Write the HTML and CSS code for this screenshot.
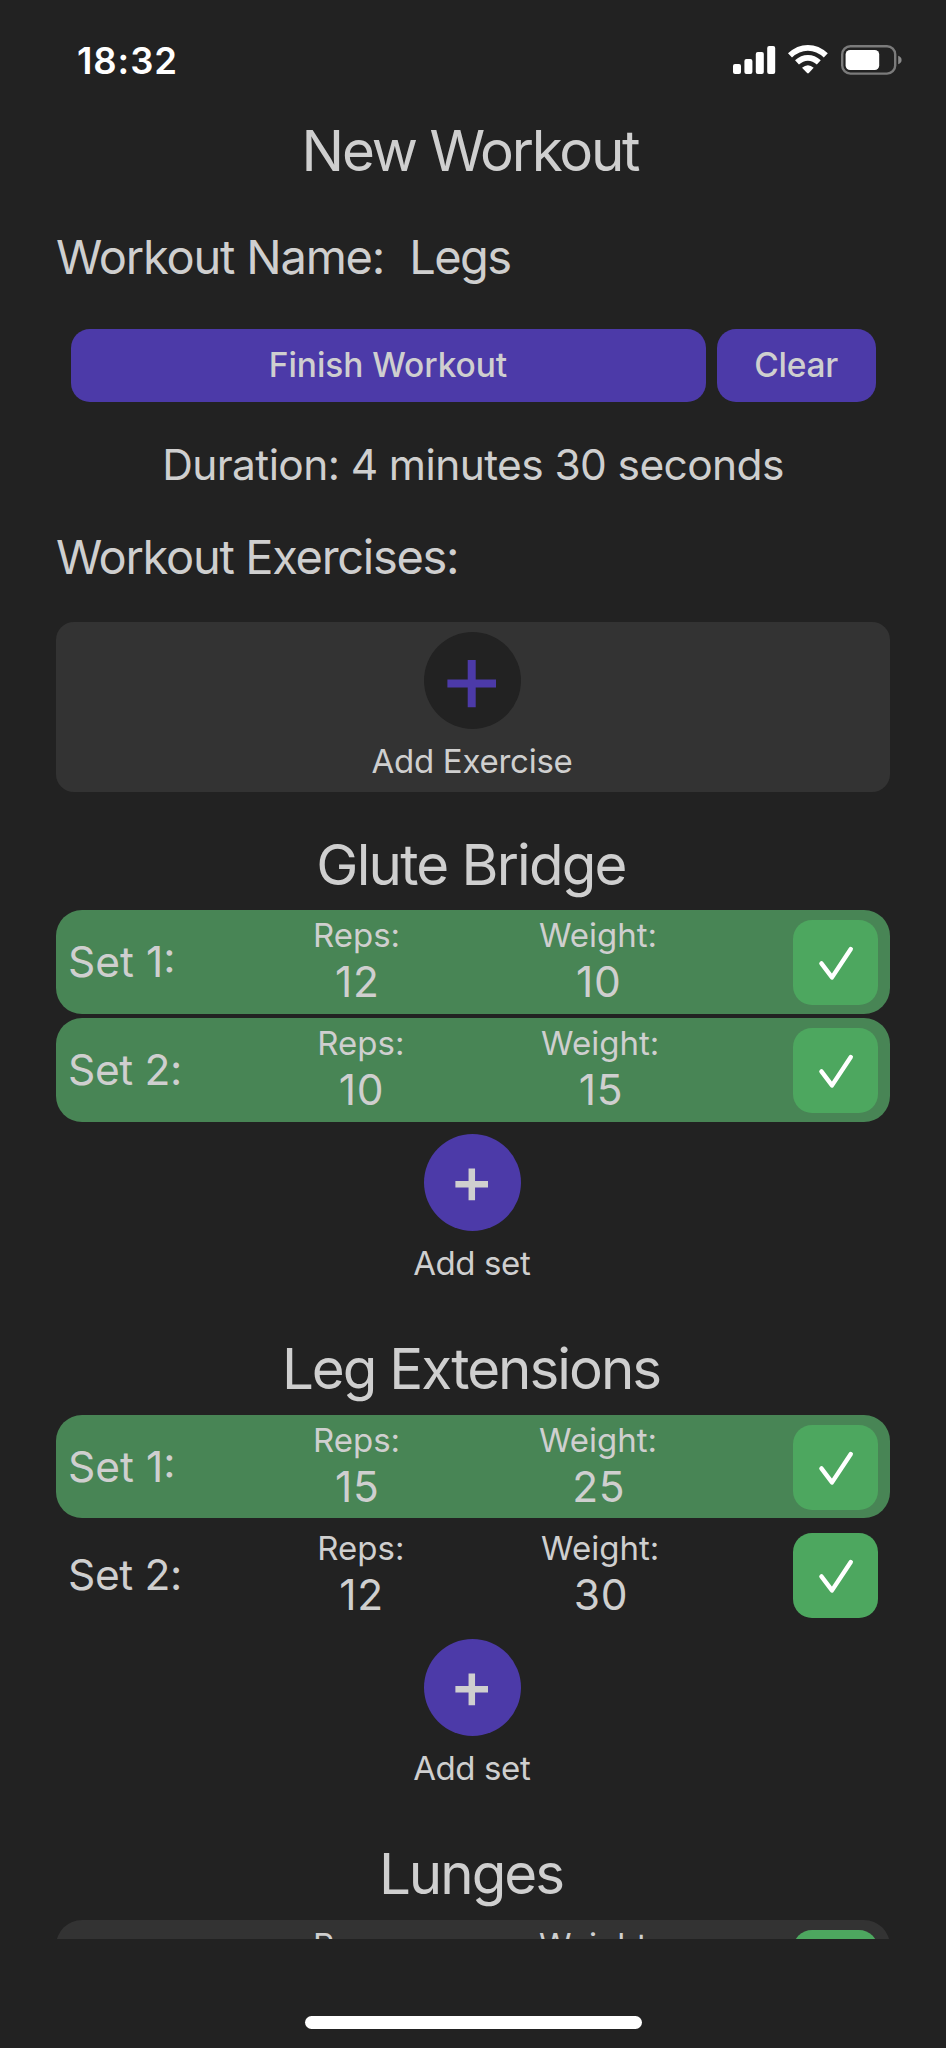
FILE: index.html
```html
<!DOCTYPE html>
<html lang="en">
<head>
<meta charset="utf-8">
<title>New Workout</title>
<link rel="stylesheet" href="styles.css">
</head>
<body>
<svg class="defs" aria-hidden="true">
  <symbol id="check" viewBox="0 0 85 85"><path d="M28.4 43.4 39 57.4 57.8 29" fill="none" stroke="#fff" stroke-width="4.4" stroke-linecap="round" stroke-linejoin="round"/></symbol>
  <symbol id="plus" viewBox="0 0 97 97"><path d="M31.4 50.3h32.6M47.8 34.4v31.8" fill="none" stroke="currentColor" stroke-width="6.5"/></symbol>
</svg>
<div class="screen">
  <main class="content">
    <header class="status">
      <span class="time">18:32</span>
      <svg class="status-icons" viewBox="733 44 169 32">
        <g fill="#fff">
          <rect x="733" y="64" width="8" height="10" rx="2"/>
          <rect x="744.4" y="59" width="8" height="15" rx="2"/>
          <rect x="755.8" y="52" width="8" height="22" rx="2"/>
          <rect x="767.2" y="46" width="8" height="28" rx="2"/>
          <path d="M802 67.8Q808 62.6 813.7 67.8L808.8 73Q808 73.8 807.1 73Z"/>
          <rect x="845.6" y="50" width="33.6" height="20" rx="4.5"/>
        </g>
        <g fill="none" stroke="#fff" stroke-width="5.8">
          <path d="M790 55.4Q798 47.8 807.9 47.8T825.8 55.4"/>
          <path d="M797 62.4Q802 57.8 807.9 57.8T818.8 62.4"/>
        </g>
        <rect x="842.2" y="46.2" width="53" height="27.4" rx="8.2" fill="none" stroke="#7b7b7b" stroke-width="2.4"/>
        <path d="M898.2 55.8Q901.6 57 901.6 60T898.2 64.2Z" fill="#8a8a8a"/>
      </svg>
    </header>
    <h1 class="title">New Workout</h1>
    <div class="name-row"><span class="section-label">Workout Name:</span><span class="name">Legs</span></div>
    <div class="actions"><button class="btn finish">Finish Workout</button><button class="btn clear">Clear</button></div>
    <p class="duration">Duration: 4 minutes 30 seconds</p>
    <h2 class="section-label exercises-label">Workout Exercises:</h2>
    <div class="add-card">
      <span class="circle dark"><svg viewBox="0 0 97 97"><path d="M23.4 51.4h48.6M47.7 28v47.2" fill="none" stroke="currentColor" stroke-width="8"/></svg></span>
      <span class="small">Add Exercise</span>
    </div>

    <section class="exercise first">
      <h3 class="exercise-title glute">Glute Bridge</h3>
      <div class="sets">
        <div class="set done"><span class="set-label">Set 1:</span><div class="field reps"><span class="small">Reps:</span><span class="value">12</span></div><div class="field weight"><span class="small">Weight:</span><span class="value">10</span></div><span class="check"><svg><use href="#check"/></svg></span></div>
        <div class="set done"><span class="set-label wide">Set 2:</span><div class="field reps"><span class="small">Reps:</span><span class="value">10</span></div><div class="field weight"><span class="small">Weight:</span><span class="value">15</span></div><span class="check"><svg><use href="#check"/></svg></span></div>
      </div>
      <div class="add-set"><span class="circle"><svg><use href="#plus"/></svg></span><span class="small">Add set</span></div>
    </section>

    <section class="exercise">
      <h3 class="exercise-title">Leg Extensions</h3>
      <div class="sets">
        <div class="set done"><span class="set-label">Set 1:</span><div class="field reps"><span class="small">Reps:</span><span class="value">15</span></div><div class="field weight"><span class="small">Weight:</span><span class="value">25</span></div><span class="check"><svg><use href="#check"/></svg></span></div>
        <div class="set"><span class="set-label wide">Set 2:</span><div class="field reps"><span class="small">Reps:</span><span class="value">12</span></div><div class="field weight"><span class="small">Weight:</span><span class="value">30</span></div><span class="check"><svg><use href="#check"/></svg></span></div>
      </div>
      <div class="add-set"><span class="circle"><svg><use href="#plus"/></svg></span><span class="small">Add set</span></div>
    </section>

    <section class="exercise">
      <h3 class="exercise-title">Lunges</h3>
      <div class="sets">
        <div class="set pending"><span class="set-label empty"></span><div class="field reps"><span class="small">Reps:</span></div><div class="field weight"><span class="small">Weight:</span></div><span class="check"></span></div>
      </div>
    </section>
  </main>
  <footer class="home"><span class="home-bar"></span></footer>
</div>
</body>
</html>
```
FILE: styles.css
```css
* { box-sizing: border-box; }

body {
  margin: 0;
  background: #222;
  color: #cfcfcf;
  font-family: Inter, "Liberation Sans", sans-serif;
}

h1, h2, h3, p { margin: 0; font-weight: 400; }
svg { display: block; }
.defs { display: none; }

.screen {
  width: 946px;
  height: 2048px;
  overflow: hidden;
  display: flex;
  flex-direction: column;
}

.content {
  height: 1938.6px;
  flex: none;
  overflow: hidden;
  padding: 0 56px;
}

/* Status bar */
.status {
  height: 121px;
  padding: 0 0 0 21px;
  display: flex;
  align-items: center;
  justify-content: space-between;
  margin-right: -12px;
}
.time { color: #fff; font-size: 36.5px; font-weight: 600; letter-spacing: 0.9px; line-height: 44px; }
.status-icons { width: 169px; height: 32px; margin-bottom: 1px; }

.title {
  font-size: 56.5px;
  line-height: 59px;
  letter-spacing: -2.2px;
  text-align: center;
  padding-right: 6px;
}

.name-row { display: flex; gap: 25px; margin-top: 47px; }
.section-label { font-size: 47px; line-height: 60px; letter-spacing: -1.2px; }
.name { font-size: 47px; line-height: 59px; letter-spacing: -1.6px; }

.actions { display: flex; gap: 11px; margin-top: 42px; padding: 0 14px 0 15px; }
.btn {
  height: 73px;
  border: 0;
  border-radius: 19px;
  padding: 0 1px 0 0;
  background: #4c3aa8;
  color: #cfcfcf;
  font: 500 33.5px/73px Inter, "Liberation Sans", sans-serif;
  letter-spacing: -0.07px;
}
.finish { flex: 1; }
.clear { width: 159px; letter-spacing: -0.25px; }

.duration {
  margin-top: 38px;
  font-size: 42.5px;
  line-height: 50px;
  letter-spacing: -0.61px;
  text-align: center;
}
.exercises-label { margin-top: 37px; letter-spacing: -1.31px; }

.small { font-size: 33px; line-height: 40px; }

.add-card {
  height: 170px;
  margin-top: 35px;
  padding: 10px 1px 0 0;
  border-radius: 18px;
  background: #333;
  display: flex;
  flex-direction: column;
  align-items: center;
  gap: 11.5px;
}
.add-card .small { letter-spacing: -0.25px; padding-right: 1px; }

.circle {
  width: 97px;
  height: 97px;
  border-radius: 50%;
  background: #4c3aa8;
  color: #cfcfcf;
}
.circle.dark { background: #222; color: #4c3aa8; }
.circle svg { width: 97px; height: 97px; }

/* Exercises */
.exercise { margin-top: 56px; }
.exercise.first { margin-top: 42.5px; }
.exercise-title {
  font-size: 56.5px;
  line-height: 60px;
  letter-spacing: -2px;
  text-align: center;
  padding-right: 4px;
}
.exercise-title.glute { letter-spacing: -1.8px; }
.sets { display: flex; flex-direction: column; gap: 4.7px; margin-top: 15.5px; }
.set {
  height: 103.5px;
  padding: 0 12px;
  border-radius: 26px;
  display: flex;
  justify-content: space-between;
}
.set.done { background: #488555; }
.set.pending { background: #333; }
.set-label { font-size: 42.5px; line-height: 103.5px; margin-right: -1.4px; }
.set-label.wide { letter-spacing: -0.36px; }
.set-label.empty { width: 107.4px; }
.field { display: flex; flex-direction: column; align-items: center; gap: 2px; padding-top: 5px; }
.reps { width: 93px; }
.weight { width: 118px; }
.value { font-size: 42.5px; line-height: 50px; letter-spacing: 0.7px; padding-left: 1.5px; }
.check {
  width: 85px;
  height: 85px;
  margin-top: 10px;
  border-radius: 19px;
  background: #4da75f;
}
.check svg { width: 85px; height: 85px; }

.add-set {
  margin-top: 12.3px;
  padding-right: 1px;
  display: flex;
  flex-direction: column;
  align-items: center;
  gap: 12.5px;
}
.add-set .small { letter-spacing: -0.4px; padding-right: 1.5px; }

/* Home indicator */
.home { flex: 1; display: flex; justify-content: center; align-items: flex-end; padding-bottom: 19.4px; }
.home-bar { width: 337px; height: 12.6px; border-radius: 7px; background: #fff; }
```
